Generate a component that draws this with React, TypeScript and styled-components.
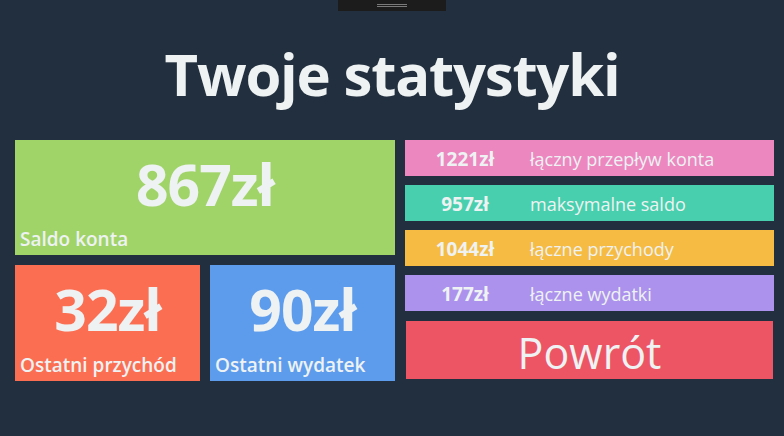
import React from "react";
import styled, { createGlobalStyle } from "styled-components";

const TEXT = "#eef2f3";

const GlobalStyle = createGlobalStyle`
  html, body {
    margin: 0;
    padding: 0;
    background: #222f3e;
  }
  body {
    font-family: "Open Sans", "Noto Sans", sans-serif;
    color: ${TEXT};
  }
`;

const Page = styled.div`
  position: relative;
  width: 784px;
  height: 436px;
  overflow: hidden;
`;

const Handle = styled.div`
  position: absolute;
  top: 0;
  left: 338px;
  width: 108px;
  height: 11px;
  background: #1c1c1c;

  &::before,
  &::after {
    content: "";
    position: absolute;
    left: 39px;
    width: 30px;
    height: 1px;
    background: #7a7a7a;
  }
  &::before {
    top: 4px;
  }
  &::after {
    top: 6px;
  }
`;

const Title = styled.h1`
  margin: 0;
  padding-top: 38px;
  height: 140px;
  box-sizing: border-box;
  text-align: center;
  font-size: 58px;
  font-weight: 700;
  line-height: 72px;
  letter-spacing: -1.2px;
`;

const Grid = styled.div`
  display: grid;
  grid-template-columns: 380px 369px;
  gap: 10px;
  margin-left: 15px;
`;

const LeftCol = styled.div`
  display: grid;
  grid-template-rows: 115px 116px;
  gap: 10px;
`;

const SmallRow = styled.div`
  display: grid;
  grid-template-columns: 185px 185px;
  gap: 10px;
`;

const Tile = styled.div<{ $bg: string }>`
  background: ${(p) => p.$bg};
  display: flex;
  flex-direction: column;
  justify-content: space-between;
  padding: 8px 5px 4px;
  box-sizing: border-box;
`;

const Amount = styled.div`
  text-align: center;
  font-size: 57px;
  font-weight: 700;
  line-height: 72px;
  letter-spacing: -1px;
`;

const TileLabel = styled.div`
  font-size: 19px;
  font-weight: 600;
  line-height: 24px;
`;

const RightCol = styled.div`
  display: flex;
  flex-direction: column;
  gap: 9px;
`;

const StatRow = styled.div<{ $bg: string }>`
  height: 36px;
  padding-top: 2px;
  box-sizing: border-box;
  background: ${(p) => p.$bg};
  display: flex;
  align-items: center;
`;

const StatValue = styled.span`
  width: 120px;
  text-align: center;
  font-size: 19px;
  font-weight: 700;
`;

const StatLabel = styled.span`
  margin-left: 5px;
  font-size: 18px;
  font-weight: 400;
`;

const BackButton = styled.button`
  margin: 1px 1px 0;
  height: 58px;
  border: none;
  background: #ed5565;
  color: ${TEXT};
  font-family: inherit;
  font-size: 43px;
  font-weight: 400;
  line-height: 58px;
  padding: 3px 0 0;
  cursor: pointer;
`;

const stats = [
  { value: "1221zł", label: "łączny przepływ konta", bg: "#ec87c0" },
  { value: "957zł", label: "maksymalne saldo", bg: "#48cfad" },
  { value: "1044zł", label: "łączne przychody", bg: "#f6bb42" },
  { value: "177zł", label: "łączne wydatki", bg: "#ac92ec" },
];

export default function App() {
  return (
    <Page>
      <GlobalStyle />
      <Handle />
      <Title>Twoje statystyki</Title>
      <Grid>
        <LeftCol>
          <Tile $bg="#a0d468">
            <Amount>867zł</Amount>
            <TileLabel>Saldo konta</TileLabel>
          </Tile>
          <SmallRow>
            <Tile $bg="#fc6e51">
              <Amount>32zł</Amount>
              <TileLabel>Ostatni przychód</TileLabel>
            </Tile>
            <Tile $bg="#5d9cec">
              <Amount>90zł</Amount>
              <TileLabel>Ostatni wydatek</TileLabel>
            </Tile>
          </SmallRow>
        </LeftCol>
        <RightCol>
          {stats.map((s) => (
            <StatRow key={s.label} $bg={s.bg}>
              <StatValue>{s.value}</StatValue>
              <StatLabel>{s.label}</StatLabel>
            </StatRow>
          ))}
          <BackButton>Powrót</BackButton>
        </RightCol>
      </Grid>
    </Page>
  );
}
